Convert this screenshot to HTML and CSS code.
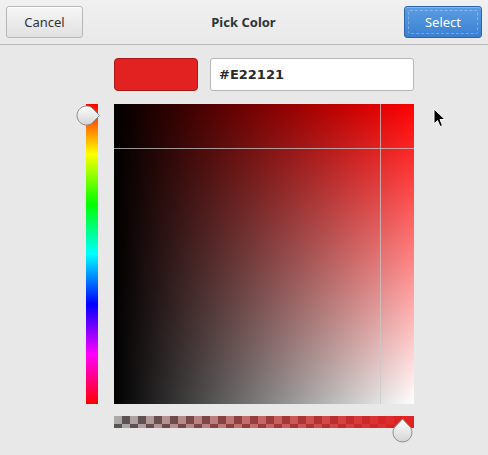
FILE: index.html
```html
<!DOCTYPE html>
<html lang="en">
<head>
    <meta charset="UTF-8">
    <title>Pick Color</title>
    <link rel="stylesheet" href="styles.css">
</head>
<body>
    <div class="dialog">
        <div class="header">
            <button class="btn">Cancel</button>
            <div class="title">Pick Color</div>
            <button class="btn btn-primary"><span class="focus">Select</span></button>
        </div>

        <div class="editor">
            <div></div>
            <div class="top-row">
                <div class="swatch"></div>
                <div class="entry">#E22121</div>
            </div>

            <div class="hue">
                <svg class="hue-knob" width="25" height="21" viewBox="0 0 25 21">
                    <defs>
                        <linearGradient id="kg1" x1="0" y1="0" x2="0" y2="1">
                            <stop offset="0" stop-color="#ffffff"/>
                            <stop offset="1" stop-color="#d4d4d4"/>
                        </linearGradient>
                    </defs>
                    <path d="M10.5 1 A9.5 9.5 0 1 0 15.5 18.6 L23.5 10.5 L15.5 2.4 A9.5 9.5 0 0 0 10.5 1 Z" fill="url(#kg1)" stroke="#8e8e8e" stroke-width="1"/>
                </svg>
            </div>
            <div class="plane">
                <div class="cross-v"></div>
                <div class="cross-h"></div>
            </div>

            <div></div>
            <div class="alpha">
                <div class="alpha-fill"></div>
                <svg class="alpha-knob" width="21" height="25" viewBox="0 0 21 25">
                    <defs>
                        <linearGradient id="kg2" x1="0" y1="0" x2="0" y2="1">
                            <stop offset="0" stop-color="#ffffff"/>
                            <stop offset="1" stop-color="#d4d4d4"/>
                        </linearGradient>
                    </defs>
                    <path d="M10.5 1 L18.6 9.5 A9.5 9.5 0 1 1 2.4 9.5 Z" fill="url(#kg2)" stroke="#8e8e8e" stroke-width="1"/>
                </svg>
            </div>
        </div>

        <!-- mouse pointer in the shot -->
        <svg class="pointer" width="14" height="22" viewBox="0 0 14 22">
            <path d="M1 1 L1 16 L4.5 12.5 L7 18.5 L9.5 17.5 L7 11.5 L12 11.5 Z" fill="#000" stroke="#fff" stroke-width="1"/>
        </svg>
    </div>
</body>
</html>
```

FILE: styles.css
```css
/* Color chooser dialog */
body {
    margin: 0;
    background-color: #e8e8e8;
    font-family: "Noto Sans", "DejaVu Sans", sans-serif;
    font-size: 13px;
    color: #2e3436;
}

.dialog {
    position: relative;
    width: 488px;
    height: 455px;
    overflow: hidden;
}

.header {
    display: flex;
    align-items: center;
    justify-content: space-between;
    height: 45px;
    padding: 0 6px;
    background: linear-gradient(#f0f0f0, #e9e9e9);
    border-bottom: 1px solid #b9b9b9;
    box-sizing: border-box;
}

.title {
    font-weight: bold;
    font-size: 13px;
    color: #2e3436;
}

.btn {
    width: 77px;
    height: 32px;
    margin-top: -1px;
    border: 1px solid #b6b6b6;
    border-radius: 3px;
    background: linear-gradient(#f6f6f6, #e1e1e1);
    font-family: "Noto Sans", "DejaVu Sans", sans-serif;
    font-size: 13px;
    color: #2e3436;
    padding: 0;
    box-shadow: inset 0 1px #ffffff;
}

.btn-primary {
    width: 78px;
    border-color: #2a65ae;
    background: linear-gradient(#5b9de4, #3b80d0);
    color: #ffffff;
    box-shadow: inset 0 1px rgba(255, 255, 255, 0.25);
    padding: 3px;
}

.btn-primary .focus {
    display: flex;
    align-items: center;
    justify-content: center;
    height: 100%;
    border: 1px dashed rgba(255, 255, 255, 0.3);
    border-radius: 2px;
    box-sizing: border-box;
}

.editor {
    display: grid;
    grid-template-columns: 12px 300px;
    column-gap: 16px;
    row-gap: 12px;
    padding-left: 86px;
    padding-top: 13px;
}

.top-row {
    display: flex;
    gap: 12px;
    height: 33px;
    margin-bottom: 1px;
}

.swatch {
    width: 84px;
    background-color: #e22121;
    border: 1px solid #a81818;
    border-radius: 4px;
    box-sizing: border-box;
}

.entry {
    flex: 1;
    display: flex;
    align-items: center;
    padding-left: 8px;
    background-color: #ffffff;
    border: 1px solid #b7b7b7;
    border-radius: 3px;
    font-family: "DejaVu Sans", sans-serif;
    font-weight: bold;
    font-size: 13px;
    color: #2a2a2a;
}

.hue {
    position: relative;
    height: 300px;
    background: linear-gradient(to bottom, #f00, #ff0, #0f0, #0ff, #00f, #f0f, #f00);
}

.hue-knob {
    position: absolute;
    left: -10px;
    top: 1px;
}

.plane {
    position: relative;
    height: 300px;
    background:
        linear-gradient(to right, #000, rgba(0, 0, 0, 0)),
        linear-gradient(to bottom, #f00, #fff);
}

.cross-v {
    position: absolute;
    left: 266px;
    top: 0;
    bottom: 0;
    width: 1px;
    background-color: rgba(200, 200, 200, 0.75);
}

.cross-h {
    position: absolute;
    top: 44px;
    left: 0;
    right: 0;
    height: 1px;
    background-color: rgba(200, 200, 200, 0.75);
}

.alpha {
    position: relative;
    height: 12px;
    background: repeating-conic-gradient(#555 0 25%, #aaa 0 50%) 0 0 / 16px 16px;
}

.alpha-fill {
    height: 100%;
    background: linear-gradient(to right, rgba(226, 33, 33, 0), #e22121);
}

.alpha-knob {
    position: absolute;
    left: 278px;
    top: 2px;
}

.pointer {
    position: absolute;
    left: 433px;
    top: 108px;
}
```
